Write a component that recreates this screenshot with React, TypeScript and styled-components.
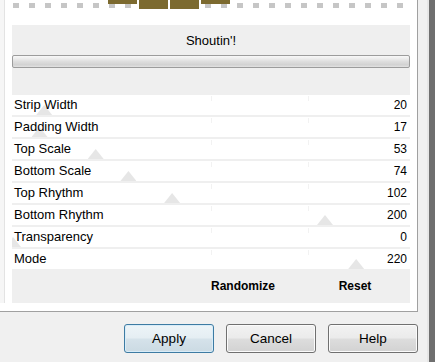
import React from 'react';
import styled, { createGlobalStyle } from 'styled-components';

// --- Global ---
const GlobalStyle = createGlobalStyle`
  html, body {
    margin: 0;
    padding: 0;
    background: #f0f0f0;
  }
  body {
    font-family: "Liberation Sans", Arial, sans-serif;
    color: #000;
  }
`;

// --- Styled Components ---
const Window = styled.div`
  display: flex;
  width: 435px;
  height: 362px;
  overflow: hidden;
  background: #f0f0f0;
`;

const Main = styled.div`
  flex: 1;
  display: flex;
  flex-direction: column;
`;

const Edge = styled.div`
  box-sizing: border-box;
  width: 8px;
  background: #6f6f6f;
  border-left: 2px solid #e6e6e6;
`;

const Panel = styled.div`
  box-sizing: border-box;
  width: 418px;
  height: 312px;
  display: flex;
  background: #fff;
  border-right: 1px solid #a0a0a0;
  border-bottom: 1px solid #a0a0a0;
`;

const Gutter = styled.div`
  width: 4px;
  margin-bottom: 8px;
  background: #f6f6f6;
  border-right: 1px solid #e3e3e3;
`;

const Body = styled.div`
  flex: 1;
  display: flex;
  flex-direction: column;
  padding: 0 7px 8px 7px;
`;

const Preview = styled.svg`
  display: block;
  width: 398px;
  height: 25px;
  flex: none;
`;

const Settings = styled.div`
  flex: 1;
  display: flex;
  flex-direction: column;
  background: #efefef;
`;

const Title = styled.div`
  height: 30px;
  display: flex;
  align-items: center;
  justify-content: center;
  font-size: 13px;
`;

const Progress = styled.div`
  box-sizing: border-box;
  height: 13px;
  border: 1px solid #9c9c9c;
  border-radius: 2px;
  background: linear-gradient(#f8f8f8 0%, #ececec 25%, #dedede 50%, #d2d2d2 80%, #e2e2e2 100%);
`;

const Rows = styled.div`
  margin-top: 27px;
  display: flex;
  flex-direction: column;
  gap: 2px;
`;

const Row = styled.div`
  position: relative;
  height: 20px;
  display: flex;
  align-items: center;
  justify-content: space-between;
  padding: 0 3px 1px 2px;
  box-sizing: border-box;
  background: #fff;
  overflow: hidden;
`;

const Label = styled.span`
  position: relative;
  font-size: 13px;
`;

const Value = styled.span`
  position: relative;
  font-size: 12px;
`;

const Thumb = styled.div`
  position: absolute;
  bottom: 0;
  width: 16px;
  height: 10px;
  background: #e6e6e6;
  clip-path: polygon(50% 0, 100% 100%, 0 100%);
`;

const Tick = styled.div<{ $at: number }>`
  position: absolute;
  top: 1px;
  left: ${p => p.$at}px;
  width: 1px;
  height: 5px;
  background: #f2f2f2;
`;

const Footer = styled.div`
  height: 34px;
  display: flex;
  justify-content: flex-end;
  padding-right: 6px;
`;

const LinkButton = styled.button<{ $width: number }>`
  width: ${p => p.$width}px;
  border: none;
  background: transparent;
  font-family: inherit;
  font-size: 12px;
  font-weight: bold;
  color: #000;
  padding: 0;
`;

const ButtonRow = styled.div`
  margin-top: 12px;
  display: flex;
  justify-content: flex-end;
  gap: 12px;
  padding-right: 9px;
`;

const DialogButton = styled.button<{ $default?: boolean }>`
  box-sizing: border-box;
  width: 90px;
  height: 29px;
  border-radius: 3px;
  font-family: inherit;
  font-size: 13.5px;
  color: #000;
  padding: 0;
  border: 1px solid ${p => (p.$default ? '#3d7ba3' : '#707070')};
  box-shadow: inset 0 0 0 1px ${p => (p.$default ? '#d8ecf8' : '#fbfbfb')};
  background: ${p =>
    p.$default
      ? 'linear-gradient(#edf4f8 0%, #e5eef3 48%, #d5e2ea 52%, #cbdae3 100%)'
      : 'linear-gradient(#f2f2f2 0%, #ebebeb 48%, #dddddd 52%, #d2d2d2 100%)'};
`;

// --- Data ---
interface Setting {
  label: string;
  value: number;
}

const SETTINGS: Setting[] = [
  { label: 'Strip Width', value: 20 },
  { label: 'Padding Width', value: 17 },
  { label: 'Top Scale', value: 53 },
  { label: 'Bottom Scale', value: 74 },
  { label: 'Top Rhythm', value: 102 },
  { label: 'Bottom Rhythm', value: 200 },
  { label: 'Transparency', value: 0 },
  { label: 'Mode', value: 220 },
];

const BLOCKS = [
  { x: 96, h: 4 },
  { x: 127, h: 9 },
  { x: 158, h: 9 },
  { x: 189, h: 4 },
];

function PreviewStrip() {
  const squares = Array.from({ length: 25 }, (_, i) => 1 + i * 16);
  return (
    <Preview viewBox="0 0 398 25">
      {squares.map(x => (
        <rect key={x} x={x} y={3} width={6} height={5} fill="#c6c6c6" />
      ))}
      {BLOCKS.map(b => (
        <rect key={b.x} x={b.x} y={0} width={29} height={b.h} fill="#7c6a2f" />
      ))}
    </Preview>
  );
}

// --- App Component ---
function App() {
  return (
    <Window>
      <GlobalStyle />
      <Main>
        <Panel>
          <Gutter />
          <Body>
            <PreviewStrip />
            <Settings>
              <Title>Shoutin'!</Title>
              <Progress />
              <Rows>
                {SETTINGS.map(s => (
                  <Row key={s.label}>
                    <Thumb style={{ left: s.value * 1.56 - 7 }} />
                    <Tick $at={199} />
                    <Tick $at={296} />
                    <Label>{s.label}</Label>
                    <Value>{s.value}</Value>
                  </Row>
                ))}
              </Rows>
              <Footer>
                <LinkButton $width={126}>Randomize</LinkButton>
                <LinkButton $width={98}>Reset</LinkButton>
              </Footer>
            </Settings>
          </Body>
        </Panel>
        <ButtonRow>
          <DialogButton $default>Apply</DialogButton>
          <DialogButton>Cancel</DialogButton>
          <DialogButton>Help</DialogButton>
        </ButtonRow>
      </Main>
      <Edge />
    </Window>
  );
}

export default App;
